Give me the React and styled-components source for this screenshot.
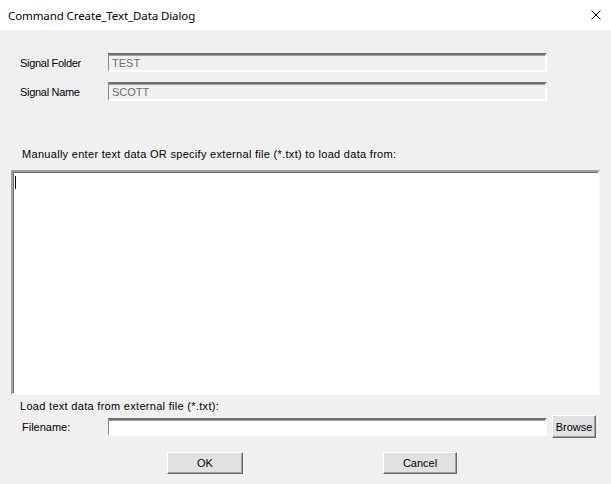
import React from "react";
import styled, { createGlobalStyle } from "styled-components";

const Global = createGlobalStyle`
  html, body { margin: 0; padding: 0; background: #f0f0f0; }
  * { box-sizing: border-box; }
`;

const Window = styled.div`
  width: 611px;
  height: 484px;
  display: flex;
  flex-direction: column;
  background: #f0f0f0;
  font-family: "Liberation Sans", Arial, sans-serif;
  font-size: 11px;
  color: #000;
  overflow: hidden;
`;

const TitleBar = styled.div`
  height: 30px;
  flex: none;
  background: #fff;
  display: flex;
  align-items: center;
  justify-content: space-between;
  padding: 0 10px 0 8px;
`;

const Title = styled.span`
  font-family: "Noto Sans", "Open Sans", sans-serif;
  font-size: 11.5px;
  color: #000;
  letter-spacing: -0.1px;
`;

const CloseIcon = styled.svg`
  width: 10px;
  height: 10px;
  display: block;
`;

const Body = styled.div`
  flex: 1;
  display: flex;
  flex-direction: column;
  padding: 23px 11px 0 11px;
`;

const FieldRow = styled.div`
  display: flex;
  align-items: center;
  height: ${(p) => p.$h || 19}px;
  margin-top: ${(p) => p.$mt || 0}px;
  padding-left: ${(p) => p.$indent || 9}px;
`;

const Label = styled.span`
  width: ${(p) => p.$w || 88}px;
  flex: none;
  white-space: nowrap;
  letter-spacing: ${(p) => p.$ls || 0}px;
`;

const TextBox = styled.div`
  width: ${(p) => p.$w || 439}px;
  height: ${(p) => p.$h || 19}px;
  background: ${(p) => (p.$disabled ? "#f0f0f0" : "#fff")};
  border-top: 2px solid #6e6e6e;
  border-left: 1px solid #8a8a8a;
  border-right: 2px solid #fdfdfd;
  border-bottom: 2px solid #fdfdfd;
  box-shadow: inset 0 1px 0 #a0a0a0;
  color: #6d6d6d;
  display: flex;
  align-items: center;
  padding-left: 3px;
  flex: none;
`;

const Caption = styled.div`
  height: 14px;
  line-height: 14px;
  margin-top: ${(p) => p.$mt || 0}px;
  padding-left: ${(p) => p.$indent || 9}px;
  white-space: nowrap;
  letter-spacing: 0.3px;
`;

const TextArea = styled.div`
  width: 589px;
  height: 225px;
  margin-top: 9px;
  background: #fff;
  border-top: 2px solid #a0a0a0;
  border-left: 2px solid #a0a0a0;
  border-right: 2px solid #fcfcfc;
  border-bottom: 2px solid #fcfcfc;
  box-shadow: inset 1px 1px 0 #696969;
  position: relative;
`;

const Caret = styled.span`
  position: absolute;
  left: 2px;
  top: 4px;
  width: 1px;
  height: 13px;
  background: #000;
`;

const Button = styled.button`
  width: ${(p) => p.$w || 76}px;
  height: ${(p) => p.$h || 22}px;
  flex: none;
  font-family: "Liberation Sans", Arial, sans-serif;
  font-size: 11px;
  color: #000;
  background: #e1e1e1;
  border-top: 1px solid #fff;
  border-left: 1px solid #fff;
  border-right: 1px solid #696969;
  border-bottom: 1px solid #696969;
  box-shadow: inset -1px -1px 0 #a0a0a0, inset 1px 1px 0 #e3e3e3;
  padding: 0;
  margin-left: ${(p) => p.$ml || 0}px;
`;

const ButtonRow = styled.div`
  display: flex;
  align-items: center;
  margin-top: 14px;
  padding-left: 156px;
`;

export default function App() {
  return (
    <>
      <Global />
      <Window>
        <TitleBar>
          <Title>Command Create_Text_Data Dialog</Title>
          <CloseIcon viewBox="0 0 10 10">
            <path d="M0.5 0.5 L9.5 9.5 M9.5 0.5 L0.5 9.5" stroke="#000" strokeWidth="1" fill="none" />
          </CloseIcon>
        </TitleBar>
        <Body>
          <FieldRow>
            <Label $w={88} $ls={-0.3}>Signal Folder</Label>
            <TextBox $disabled>TEST</TextBox>
          </FieldRow>
          <FieldRow $mt={10}>
            <Label $w={88} $ls={-0.3}>Signal Name</Label>
            <TextBox $disabled>SCOTT</TextBox>
          </FieldRow>
          <Caption $mt={46} $indent={11}>
            Manually enter text data OR specify external file (*.txt) to load data from:
          </Caption>
          <TextArea>
            <Caret />
          </TextArea>
          <Caption $mt={4} $indent={9}>
            Load text data from external file (*.txt):
          </Caption>
          <FieldRow $h={23} $mt={2} $indent={11}>
            <Label $w={86}>Filename:</Label>
            <TextBox $h={18} $w={439} />
            <Button $w={44} $h={23} $ml={5}>Browse</Button>
          </FieldRow>
          <ButtonRow>
            <Button>OK</Button>
            <Button $ml={140} $w={74}>Cancel</Button>
          </ButtonRow>
        </Body>
      </Window>
    </>
  );
}
